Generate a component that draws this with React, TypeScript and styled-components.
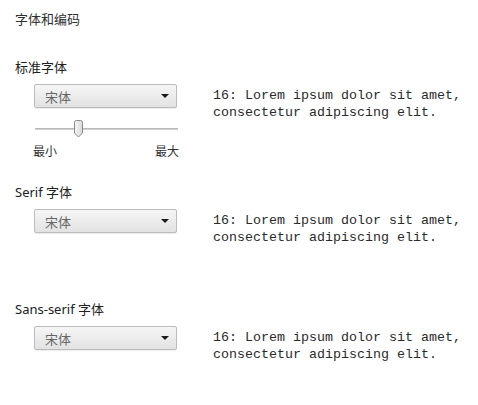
import React from 'react'
import styled, { createGlobalStyle } from 'styled-components'

const GlobalStyle = createGlobalStyle`
    body {
        margin: 0;
        background: #ffffff;
        font-family: "Noto Sans", "Noto Sans CJK SC", sans-serif;
        color: #303030;
    }
`

const SAMPLE_LINES = ['16: Lorem ipsum dolor sit amet,', 'consectetur adipiscing elit.']

const FontSelect = () => {
    return (
        <SelectBox>
            <SelectText>宋体</SelectText>
            <Arrow />
        </SelectBox>
    )
}

const Sample = ({ offset }: { offset: number }) => {
    return (
        <SampleText $offset={offset}>
            {SAMPLE_LINES.map((line) => (
                <div key={line}>{line}</div>
            ))}
        </SampleText>
    )
}

const App = () => {
    return (
        <Page>
            <GlobalStyle />
            <Title>字体和编码</Title>

            <Section $top={30}>
                <Label>标准字体</Label>
                <Row>
                    <LeftCol>
                        <FontSelect />
                        <Slider>
                            <Track />
                            <Thumb>
                                <svg width="11" height="18" viewBox="0 0 11 18">
                                    <defs>
                                        <linearGradient id="tg" x1="0" y1="0" x2="1" y2="0">
                                            <stop offset="0" stopColor="#f6f6f6" />
                                            <stop offset="1" stopColor="#d8d8d8" />
                                        </linearGradient>
                                    </defs>
                                    <path
                                        d="M1.5 2.5 Q1.5 0.5 3.5 0.5 L7.5 0.5 Q9.5 0.5 9.5 2.5 L9.5 13 L5.5 17 L1.5 13 Z"
                                        fill="url(#tg)"
                                        stroke="#8a8a8a"
                                        strokeWidth="1"
                                    />
                                </svg>
                            </Thumb>
                        </Slider>
                        <SliderLabels>
                            <span>最小</span>
                            <span>最大</span>
                        </SliderLabels>
                    </LeftCol>
                    <Sample offset={3} />
                </Row>
            </Section>

            <Section $top={22}>
                <Label>Serif 字体</Label>
                <Row>
                    <LeftCol>
                        <FontSelect />
                    </LeftCol>
                    <Sample offset={3} />
                </Row>
            </Section>

            <Section $top={54}>
                <Label>Sans-serif 字体</Label>
                <Row>
                    <LeftCol>
                        <FontSelect />
                    </LeftCol>
                    <Sample offset={3} />
                </Row>
            </Section>
        </Page>
    )
}

const Page = styled.div`
    padding: 10px 15px 20px 15px;
    width: 478px;
    box-sizing: border-box;
`

const Title = styled.div`
    font-size: 13px;
    line-height: 18px;
    color: #303030;
`

const Section = styled.div<{ $top: number }>`
    margin-top: ${(p) => p.$top}px;
`

const Label = styled.div`
    font-size: 13px;
    line-height: 18px;
    color: #202020;
`

const Row = styled.div`
    display: flex;
    align-items: flex-start;
    margin-top: 8px;
`

const LeftCol = styled.div`
    width: 198px;
    flex: none;
    padding-left: 19px;
    box-sizing: border-box;
`

const SelectBox = styled.div`
    width: 143px;
    height: 24px;
    box-sizing: border-box;
    border: 1px solid #bcbcbc;
    border-radius: 2px;
    background: linear-gradient(#f6f6f6, #e2e2e2);
    box-shadow: 0 1px 1px rgba(0, 0, 0, 0.08);
    display: flex;
    align-items: center;
    justify-content: space-between;
    padding: 0 7px 0 10px;
`

const SelectText = styled.span`
    font-size: 13px;
    color: #666666;
    font-family: "Noto Sans CJK SC", sans-serif;
`

const Arrow = styled.span`
    width: 0;
    height: 0;
    border-left: 4px solid transparent;
    border-right: 4px solid transparent;
    border-top: 4px solid #1a1a1a;
`

const Slider = styled.div`
    position: relative;
    width: 143px;
    height: 20px;
    margin: 12px 0 0 1px;
`

const Track = styled.div`
    position: absolute;
    left: 0;
    right: 0;
    top: 8px;
    height: 2px;
    background: #d2d2d2;
    border-top: 1px solid #b8b8b8;
    box-sizing: border-box;
`

const Thumb = styled.div`
    position: absolute;
    left: 38px;
    top: 0;
    line-height: 0;
`

const SliderLabels = styled.div`
    display: flex;
    justify-content: space-between;
    width: 146px;
    margin-left: -1px;
    margin-top: 3px;
    font-size: 12px;
    line-height: 18px;
    color: #303030;
`

const SampleText = styled.div<{ $offset: number }>`
    margin-top: ${(p) => p.$offset}px;
    font-family: "Liberation Mono", monospace;
    font-size: 13.33px;
    line-height: 17px;
    color: #2a2a2a;
    white-space: nowrap;
`

export default App
